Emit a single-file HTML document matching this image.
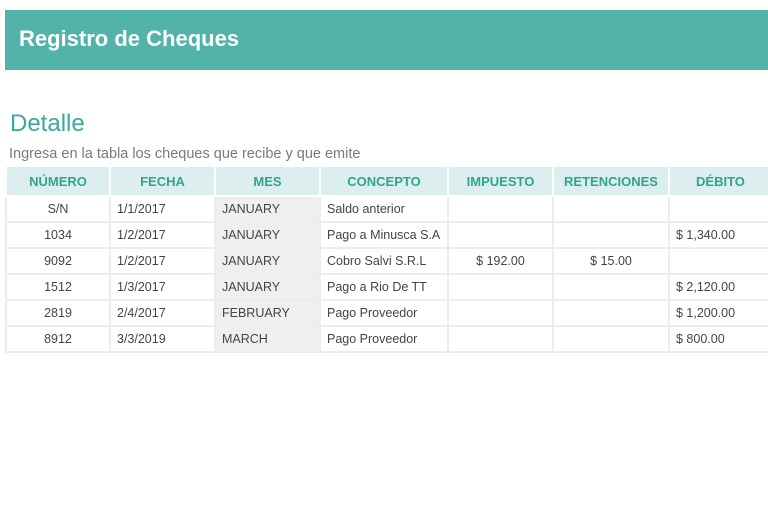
<!DOCTYPE html>
<html><head><meta charset="utf-8"><style>
*{margin:0;padding:0;box-sizing:border-box}
body{width:768px;height:508px;background:#fff;position:relative;overflow:hidden;font-family:"Liberation Sans",sans-serif}
.ban{position:absolute;left:5px;top:10px;width:763px;height:60px;background:#52b3a8}
.ban span{position:absolute;left:14px;top:16px;color:#fff;font-weight:bold;font-size:22px}
.det{position:absolute;left:10px;top:110px;font-size:24px;color:#3aa89b}
.sub{position:absolute;left:9px;top:146px;font-size:14.5px;color:#7a7a7a}
table{position:absolute;left:5px;top:167px;border-collapse:collapse;font-size:12.5px;color:#444;width:766px;table-layout:fixed}
th{background:#dcefee;color:#2fa394;font-weight:bold;height:29px;border-left:2px solid #fff;border-right:2px solid #fff;border-bottom:2px solid #fff;font-size:13px}
td{height:26px;border:2px solid #ececec;padding:0 6px;white-space:nowrap;overflow:hidden}
td.c{text-align:center}
td.m{background:#efefef}
</style></head><body>
<div class="ban"><span>Registro de Cheques</span></div>
<div class="det">Detalle</div>
<div class="sub">Ingresa en la tabla los cheques que recibe y que emite</div>
<table>
<colgroup><col style="width:104px"><col style="width:105px"><col style="width:105px"><col style="width:128px"><col style="width:105px"><col style="width:116px"><col style="width:103px"></colgroup>
<tr><th>NÚMERO</th><th>FECHA</th><th>MES</th><th>CONCEPTO</th><th>IMPUESTO</th><th>RETENCIONES</th><th>DÉBITO</th></tr>
<tr><td class="c">S/N</td><td>1/1/2017</td><td class="m">JANUARY</td><td>Saldo anterior</td><td></td><td></td><td></td></tr>
<tr><td class="c">1034</td><td>1/2/2017</td><td class="m">JANUARY</td><td>Pago a Minusca S.A</td><td></td><td></td><td>$ 1,340.00</td></tr>
<tr><td class="c">9092</td><td>1/2/2017</td><td class="m">JANUARY</td><td>Cobro Salvi S.R.L</td><td class="c">$ 192.00</td><td class="c">$ 15.00</td><td></td></tr>
<tr><td class="c">1512</td><td>1/3/2017</td><td class="m">JANUARY</td><td>Pago a Rio De TT</td><td></td><td></td><td>$ 2,120.00</td></tr>
<tr><td class="c">2819</td><td>2/4/2017</td><td class="m">FEBRUARY</td><td>Pago Proveedor</td><td></td><td></td><td>$ 1,200.00</td></tr>
<tr><td class="c">8912</td><td>3/3/2019</td><td class="m">MARCH</td><td>Pago Proveedor</td><td></td><td></td><td>$ 800.00</td></tr>
</table>
</body></html>
